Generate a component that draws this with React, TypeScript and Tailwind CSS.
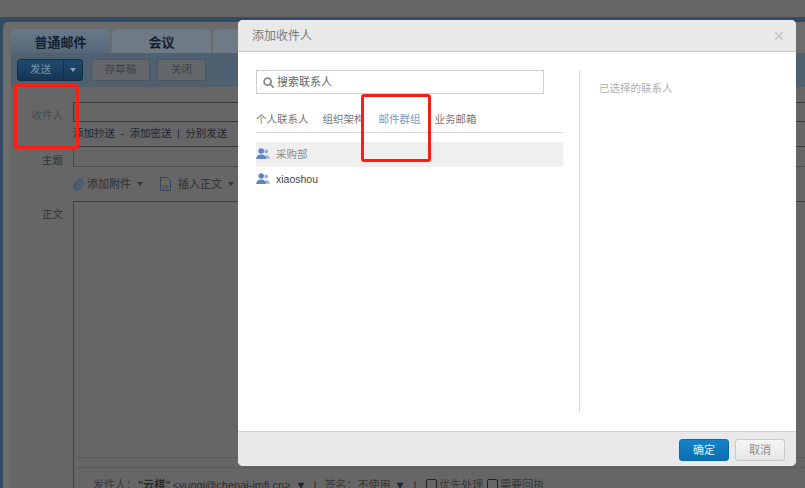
const CJK = "font-['Liberation_Sans','Noto_Sans_CJK_SC',sans-serif]";

function People() {
  return (
    <svg width="14" height="12" viewBox="0 0 14 12" className="shrink-0 -mt-[2px]">
      <circle cx="10.2" cy="3.6" r="2" fill="#9db3d6" />
      <path d="M8 10.8c.1-2.4 1-3.6 2.3-3.6 1.8 0 3.4 1 3.7 3.6z" fill="#9db3d6" />
      <circle cx="5.2" cy="3" r="2.8" fill="#5f86c4" />
      <path d="M.2 11c.1-3 1.7-4.6 5-4.6s4.7 1.6 4.8 4.6z" fill="#5f86c4" />
    </svg>
  );
}

function Caret({ className }: { className: string }) {
  return <span className={`inline-block w-0 h-0 border-x-[3.5px] border-x-transparent border-t-[4px] ${className}`} />;
}

function Background() {
  return (
    <div className="h-[488px] bg-[#666666] overflow-hidden flex flex-col">
      <div className="h-[17px] shrink-0" />
      <div className="flex-1 bg-[#344a62] pl-[3px] pt-[5px] min-h-0">
        <div className="h-full bg-[#6c6c6c] rounded-tl-[5px] flex flex-col">
          <div className="h-[65px] ml-[8px] pt-[7px] shrink-0">
            <div className="flex gap-[2px] h-[24px]">
              <div className="w-[99px] pt-[3px] bg-linear-to-b from-[#687a8a] to-[#566878] rounded-t-[5px] flex items-center justify-center text-[13px] font-bold text-[#10202e]">普通邮件</div>
              <div className="w-[99px] pt-[3px] bg-[#6e7a85] rounded-t-[5px] flex items-center justify-center text-[13px] font-bold text-[#10202e]">会议</div>
              <div className="w-[30px] bg-[#6e7a85] rounded-t-[5px]" />
            </div>
            <div className="h-[34px] bg-[#4f6070] flex items-center pl-[6px]">
              <div className="flex w-[66px] h-[22px] bg-linear-to-b from-[#1e4a70] to-[#153652] border border-[#12304a] rounded-[3px] text-[10.5px] text-[#7f96a9]">
                <div className="w-[46px] flex items-center justify-center border-r border-[#12304a]">发送</div>
                <div className="flex-1 flex items-center justify-center"><Caret className="border-t-[#90a0ae]" /></div>
              </div>
              <div className="ml-[8px] w-[59px] h-[22px] bg-[#63676a] border border-[#50565a] rounded-[2px] flex items-center justify-center text-[10.5px] text-[#3d4347]">存草稿</div>
              <div className="ml-[7px] w-[49px] h-[22px] bg-[#63676a] border border-[#50565a] rounded-[2px] flex items-center justify-center text-[10.5px] text-[#3d4347]">关闭</div>
            </div>
          </div>
          <div className="flex-1 ml-[8px] bg-[#666666] min-h-0 flex">
            <div className="w-[52px] shrink-0 flex flex-col items-end text-[10.5px] text-[#333333]">
              <div className="mt-[21px] h-[14px] leading-[14px] text-[#474b50]">收件人</div>
              <div className="mt-[31px] h-[14px] leading-[14px]">主题</div>
              <div className="mt-[40px] h-[14px] leading-[14px]">正文</div>
            </div>
            <div className="flex-1 min-w-0 flex flex-col pl-[10px] text-[#1c2733]">
              <div className="mt-[15px] h-[20px] border border-[#3a3a3a] border-r-0 shrink-0" />
              <div className="h-[25px] flex items-center text-[10.5px] gap-[5.5px] border-b border-[#3a3a3a] shrink-0 whitespace-nowrap">
                <span>添加抄送</span><span>-</span><span>添加密送</span><span>|</span><span>分别发送</span>
              </div>
              <div className="mt-[1px] h-[19px] border-l border-b border-[#4a4a4a] shrink-0" />
              <div className="h-[34px] flex items-center text-[11px] text-[#2a2f34] shrink-0 whitespace-nowrap">
                <svg width="13" height="13" viewBox="0 0 24 24" fill="none" stroke="#3f5a75" strokeWidth="3" strokeLinecap="round" className="mr-[1px]">
                  <path d="M20 11 11 20a5.5 5.5 0 0 1-8-8l9-9a3.7 3.7 0 0 1 5 5l-9 9a1.8 1.8 0 0 1-3-3l8-8" />
                </svg>
                <span>添加附件</span>
                <Caret className="ml-[6px] border-t-[#2a3a4a]" />
                <svg width="13" height="14" viewBox="0 0 13 14" className="ml-[16px] mr-[6px]">
                  <path d="M1.5.5h7l3 3v10h-10z" fill="#666" stroke="#33465a" />
                  <rect x="3" y="4" width="3" height="3" fill="#8a6a30" />
                  <path d="M3 9h7M3 11h7" stroke="#4a4a4a" />
                </svg>
                <span>插入正文</span>
                <Caret className="ml-[6px] border-t-[#2a3a4a]" />
              </div>
              <div className="h-[257px] border-l border-t border-[#3f3f3f] border-b border-b-[#5c5c5c] shrink-0" />
              <div className="h-[10px] border-l border-[#3f3f3f] border-b border-b-[#5c5c5c] shrink-0" />
              <div className="flex-1 border-l border-[#3f3f3f] pl-[19px] pt-[10px] text-[11px] leading-[14px] flex whitespace-nowrap text-[#2c2c2c]">
                <span className="text-[#383838] w-[45px]">发件人：</span>
                <span className="font-bold">"云棋"</span>
                <span className="ml-[2px]">&lt;yunqi@chenai-imfi.cn&gt;</span>
                <span className="ml-[5px] w-[8px] text-[#1c2733]">▼</span>
                <span className="ml-[10px]">|</span>
                <span className="ml-[8px] text-[#383838]">签名：不使用</span>
                <span className="ml-[4px] w-[8px] text-[#1c2733]">▼</span>
                <span className="ml-[11px]">|</span>
                <span className="ml-[10px] flex gap-[2px] text-[#383838]"><i className="block w-[11px] h-[11px] mt-[1px] border border-[#222] rounded-[2px]" />优先处理</span>
                <span className="ml-[4px] flex gap-[2px] text-[#383838]"><i className="block w-[11px] h-[11px] mt-[1px] border border-[#222] rounded-[2px]" />需要回执</span>
              </div>
            </div>
          </div>
        </div>
      </div>
    </div>
  );
}

function Dialog() {
  return (
    <div className="absolute left-[238px] top-[20px] w-[558px] h-[446px] bg-white rounded-[5px] flex flex-col overflow-hidden">
      <div className="h-[32px] shrink-0 bg-[#e9e9e9] border-b border-[#c9c9c9] flex items-center justify-between pl-[14px] pr-[12px]">
        <span className="text-[12px] text-[#7a7a7a]">添加收件人</span>
        <span className="text-[#c4c4c4] text-[18px] leading-none font-['Liberation_Sans',sans-serif]">×</span>
      </div>
      <div className="flex-1 min-h-0 flex">
        <div className="w-[341px] shrink-0 pl-[18px] pr-[16px]">
          <div className="mt-[18px] w-[288px] h-[24px] border border-[#cfcfcf] flex items-center pl-[6px] gap-[3px] text-[11px] text-[#666666]">
            <svg width="11" height="11" viewBox="0 0 11 11" fill="none" stroke="#8a8a8a" strokeWidth="1.8" strokeLinecap="round">
              <circle cx="4.6" cy="4.6" r="3.5" />
              <path d="m7.4 7.4 2.8 2.8" />
            </svg>
            搜索联系人
          </div>
          <div className="mt-[15px] h-[24px] flex text-[10.5px] border-b border-[#d9d9d9] text-[#777777] whitespace-nowrap leading-[20px] gap-[14px]">
            <span>个人联系人</span>
            <span>组织架构</span>
            <span className="text-[#7d9ac6]">邮件群组</span>
            <span>业务邮箱</span>
          </div>
          <div className="mt-[9px] h-[25px] bg-[#efefef] flex items-center gap-[6px] text-[10.5px] text-[#8a8a8a]"><People />采购部</div>
          <div className="h-[25px] flex items-center gap-[6px] text-[10.5px] text-[#444444] font-['Liberation_Sans',sans-serif]"><People />xiaoshou</div>
        </div>
        <div className="mt-[18px] mb-[19px] border-l border-[#d9d9d9] pl-[19px] pt-[11px] text-[10.5px] text-[#b0b0b0] leading-[15px] flex-1">已选择的联系人</div>
      </div>
      <div className="h-[35px] shrink-0 bg-[#e9e9e9] border-t border-[#cfcfcf] flex items-start justify-end gap-[6px] pr-[11px] pt-[7px] text-[11px]">
        <div className="w-[50px] h-[22px] rounded-[3px] bg-linear-to-b from-[#1583c9] to-[#0b6fb3] border border-[#0d6aa8] text-[#e8f1f8] flex items-center justify-center">确定</div>
        <div className="w-[50px] h-[22px] rounded-[3px] bg-linear-to-b from-[#f5f5f5] to-[#e6e6e6] border border-[#c8c8c8] text-[#8a8a8a] flex items-center justify-center">取消</div>
      </div>
    </div>
  );
}

export default function App() {
  return (
    <div className={`relative h-[488px] w-[805px] overflow-hidden ${CJK}`}>
      <Background />
      <Dialog />
      <div className="absolute left-[14px] top-[84px] w-[65px] h-[65px] border-[3px] border-[#fa1e14] rounded-[3px]" />
      <div className="absolute left-[361px] top-[94px] w-[70px] h-[68px] border-[3px] border-[#fa1e14] rounded-[3px]" />
    </div>
  );
}
